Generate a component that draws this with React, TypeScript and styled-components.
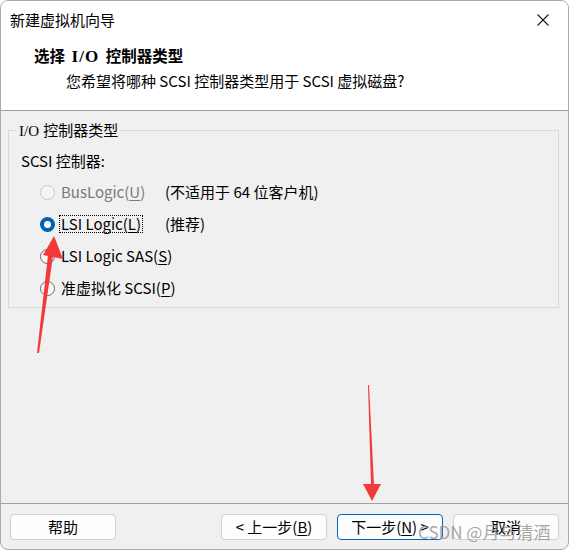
import * as React from "react";
import styled, { createGlobalStyle } from "styled-components";

const GlobalStyle = createGlobalStyle`
    html, body {
        margin: 0;
        padding: 0;
        background: #ffffff;
    }
    body {
        font-family: "Noto Sans CJK SC", "Noto Sans", sans-serif;
        font-size: 15px;
        color: #000000;
    }
`

const Window = styled.div`
    position: relative;
    box-sizing: border-box;
    width: 569px;
    height: 550px;
    border: 1px solid #a9a9a9;
    border-radius: 8px;
    overflow: hidden;
    display: flex;
    flex-direction: column;
    background: #f0f0f0;
`

const TitleBar = styled.div`
    height: 37px;
    display: flex;
    align-items: center;
    justify-content: space-between;
    padding-left: 9px;
    background: #ffffff;
    font-size: 15px;
`

const CloseButton = styled.div`
    width: 46px;
    height: 37px;
    display: flex;
    align-items: center;
    justify-content: center;
    margin-right: 2px;
`

const Header = styled.div`
    box-sizing: border-box;
    height: 73px;
    background: #ffffff;
    border-bottom: 1px solid #a0a0a0;
    padding-top: 7px;
`

const HeaderTitle = styled.div`
    padding-left: 33px;
    font-weight: bold;
    font-size: 15.5px;
    line-height: 20px;
    white-space: pre;
`

const HeaderSub = styled.div`
    padding-left: 65px;
    margin-top: 4px;
    line-height: 20px;
`

const Serif = styled.span<{wide?: boolean}>(props => {
    return {
        fontFamily: "\"Liberation Serif\", serif",
        fontSize: props.wide ? "1.1em" : "1em",
        padding: props.wide ? "0 3px" : "0 1px",
        letterSpacing: props.wide ? 1 : 0
    }
})

const Body = styled.div`
    flex: 1;
    padding: 9px 9px 0 7px;
`

const GroupBox = styled.fieldset`
    margin: 0;
    padding: 10px 12px 3px 12px;
    border: 1px solid #d9d9d9;
    min-width: 0;
`

const GroupLegend = styled.legend`
    margin-left: -5px;
    padding: 0 2px;
    line-height: 20px;
`

const FieldLabel = styled.div`
    line-height: 20px;
    margin-bottom: 5px;
`

const OptionRow = styled.div`
    height: 32px;
    display: grid;
    grid-template-columns: 20px 104px auto;
    align-items: center;
    padding-left: 20px;
`

const Radio = styled.span<{checked?: boolean, disabled?: boolean}>(props => {
    return {
        boxSizing: "border-box",
        width: 15,
        height: 15,
        marginLeft: -1,
        borderRadius: "50%",
        border: props.checked ? "none" : `1px solid ${props.disabled ? "#c8c8c8" : "#6b6b6b"}`,
        background: props.checked ? "#005fb8" : props.disabled ? "#f5f5f5" : "#f7f7f7",
        display: "flex",
        alignItems: "center",
        justifyContent: "center",
        "&::after": props.checked ? {
            content: "''",
            width: 7,
            height: 7,
            borderRadius: "50%",
            background: "#ffffff"
        } : {}
    }
})

const OptionText = styled.span<{disabled?: boolean, focused?: boolean}>(props => {
    return {
        justifySelf: "start",
        whiteSpace: "nowrap",
        lineHeight: "16px",
        color: props.disabled ? "#7a7a7a" : "#000000",
        outline: props.focused ? "1px dotted #000000" : "none",
        outlineOffset: 0,
        padding: "0 1px",
        marginLeft: -1,
        "& u": {
            textUnderlineOffset: 2
        }
    }
})

const Note = styled.span`
    line-height: 20px;
    white-space: nowrap;
`

const Footer = styled.div`
    box-sizing: border-box;
    height: 46px;
    border-top: 1px solid #a0a0a0;
    display: flex;
    align-items: flex-start;
    padding: 10px 9px 0 9px;
    gap: 10px;
`

const Button = styled.div<{isDefault?: boolean}>(props => {
    return {
        boxSizing: "border-box",
        width: 106,
        height: 26,
        borderRadius: 4,
        background: "#fdfdfd",
        border: `1px solid ${props.isDefault ? "#0067c0" : "#d0d0d0"}`,
        display: "flex",
        alignItems: "center",
        justifyContent: "center",
        lineHeight: "20px",
        whiteSpace: "pre",
        "& u": {
            textUnderlineOffset: 2
        }
    }
})

const Spacer = styled.div`
    flex: 1;
`

const Watermark = styled.span`
    position: absolute;
    left: 417px;
    top: 519px;
    font-size: 17px;
    line-height: 24px;
    color: rgba(150, 150, 150, 0.85);
    pointer-events: none;
`

const Annotations = styled.svg`
    position: absolute;
    left: -1px;
    top: -1px;
    pointer-events: none;
`

const App = () => {
    return (
        <>
            <GlobalStyle/>
            <Window>
                <TitleBar>
                    <span>新建虚拟机向导</span>
                    <CloseButton>
                        <svg width="12" height="12" viewBox="0 0 12 12">
                            <path d="M0.5 0.5 L11.5 11.5 M11.5 0.5 L0.5 11.5" stroke="#1b1b1b" strokeWidth="1.1"/>
                        </svg>
                    </CloseButton>
                </TitleBar>
                <Header>
                    <HeaderTitle>选择 <Serif wide>I/O</Serif> 控制器类型</HeaderTitle>
                    <HeaderSub>您希望将哪种 SCSI 控制器类型用于 SCSI 虚拟磁盘?</HeaderSub>
                </Header>
                <Body>
                    <GroupBox>
                        <GroupLegend><Serif>I/O</Serif> 控制器类型</GroupLegend>
                        <FieldLabel>SCSI 控制器:</FieldLabel>
                        <OptionRow>
                            <Radio disabled/>
                            <OptionText disabled>BusLogic(<u>U</u>)</OptionText>
                            <Note>(不适用于 64 位客户机)</Note>
                        </OptionRow>
                        <OptionRow>
                            <Radio checked/>
                            <OptionText focused>LSI Logic(<u>L</u>)</OptionText>
                            <Note>(推荐)</Note>
                        </OptionRow>
                        <OptionRow>
                            <Radio/>
                            <OptionText>LSI Logic SAS(<u>S</u>)</OptionText>
                        </OptionRow>
                        <OptionRow>
                            <Radio/>
                            <OptionText>准虚拟化 SCSI(<u>P</u>)</OptionText>
                        </OptionRow>
                    </GroupBox>
                </Body>
                <Footer>
                    <Button>帮助</Button>
                    <Spacer/>
                    <Button>&lt; 上一步(<u>B</u>)</Button>
                    <Button isDefault>下一步(<u>N</u>) &gt;</Button>
                    <Button>取消</Button>
                </Footer>
                <Watermark>CSDN @月与清酒</Watermark>
                <Annotations width="570" height="551" viewBox="0 0 570 551">
                    <polygon points="37,353 39,353 53,256 48,255" fill="#f23a3a"/>
                    <polygon points="54,236 43,255 63,259" fill="#f23a3a"/>
                    <polygon points="368,385 369,385 374,485 371,485" fill="#f23a3a"/>
                    <polygon points="363,484 381,484 372,501" fill="#f23a3a"/>
                </Annotations>
            </Window>
        </>
    )
}

export default App;
